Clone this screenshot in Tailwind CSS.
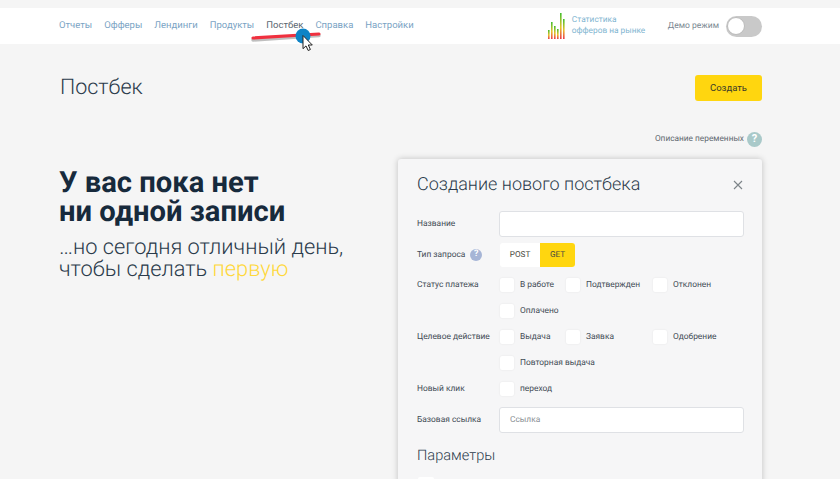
<!DOCTYPE html>
<html lang="ru">
<head>
<meta charset="utf-8">
<script src="https://cdn.jsdelivr.net/npm/@tailwindcss/browser@4"></script>
</head>
<body class="relative h-[479px] w-[840px] overflow-hidden bg-[#f5f5f5] font-['Roboto',sans-serif] text-[#1c2b3a] [text-rendering:geometricPrecision]">
<header class="mt-2 flex h-9 items-center bg-white pl-[59px] pr-[78px]">
  <nav class="flex gap-3 pt-[1px] text-[9.5px] text-[#7aa3c4]">
    <a>Отчеты</a><a>Офферы</a><a>Лендинги</a><a>Продукты</a><a class="text-[#5a6670]">Постбек</a><a>Справка</a><a>Настройки</a>
  </nav>
  <div class="ml-auto flex items-center">
    <svg width="18" height="26" viewBox="0 0 18 26" class="mr-1.5">
      <defs><linearGradient id="g" x1="0" y1="0" x2="0" y2="1"><stop offset="0" stop-color="#3fbf2f"/><stop offset="0.55" stop-color="#e8c22a"/><stop offset="1" stop-color="#ec3a4a"/></linearGradient></defs>
      <rect x="0" y="17" width="1.6" height="9" fill="url(#g)"/>
      <rect x="3" y="9" width="1.6" height="17" fill="url(#g)"/>
      <rect x="6" y="13" width="1.6" height="13" fill="url(#g)"/>
      <rect x="9" y="16" width="1.6" height="10" fill="url(#g)"/>
      <rect x="12" y="0" width="1.6" height="26" fill="url(#g)"/>
      <rect x="15" y="6" width="1.6" height="20" fill="url(#g)"/>
    </svg>
    <div class="w-[96px] text-[8.3px] leading-[11px] text-[#7fb5d1]">Статистика<br>офферов на рынке</div>
    <span class="text-[8.5px] text-[#7a8791]">Демо режим</span>
    <span class="ml-[7px] flex h-[21px] w-9 items-center rounded-full bg-[#c9c9c9] pl-[1px]"><span class="size-[18px] rounded-full border border-[#bbb] bg-white"></span></span>
  </div>
</header>

<main class="pl-[59px] pr-[78px]">
  <div class="mt-[30px] flex items-center justify-between">
    <h1 class="pl-[1px] text-[21.5px] font-light leading-[28px] text-[#2b3b4b]">Постбек</h1>
    <button class="h-[26px] w-[67px] rounded-[3px] bg-[#ffd60f] text-[9.5px] text-[#3a3a2a]">Создать</button>
  </div>
  <div class="mt-[30px] flex items-center justify-end gap-[3px] text-[8.3px] text-[#5f686f]">
    Описание переменных
    <span class="flex size-[15px] items-center justify-center rounded-full bg-[#a9c9c9] text-[11px] font-bold text-white">?</span>
  </div>
  <div class="mt-[12px] flex">
    <section class="w-[339px] pt-[10px]">
      <h2 class="text-[29.2px] font-bold leading-[29px] text-[#172a3c]">У вас пока нет<br>ни одной записи</h2>
      <p class="mt-[10px] text-[21.8px] font-light leading-[22px] text-[#2b3b4b]">…но сегодня отличный день,<br>чтобы сделать <span class="text-[#ffd83a]">первую</span></p>
    </section>
    <section class="h-[340px] w-[364px] rounded-[3px] bg-[#f6f6f7] pl-[19px] pr-[18px] pt-[15px] shadow-[0_0_6px_rgba(0,0,0,0.22)]">
      <div class="flex items-center justify-between">
        <h3 class="text-[18px] font-light leading-[22px] text-[#2b3b4b]">Создание нового постбека</h3>
        <svg width="10" height="10" viewBox="0 0 10 10" class="mr-[1px]"><path d="M1 1l8 8M9 1l-8 8" stroke="#7d8489" stroke-width="1.1" fill="none"/></svg>
      </div>

      <div class="mt-[15px] flex h-[26px] items-center">
        <span class="w-[82px] text-[8.4px] text-[#3f4b55]">Название</span>
        <span class="h-[26px] w-[245px] rounded-[3px] border border-[#dfe1e5] bg-white"></span>
      </div>
      <div class="mt-[6px] flex h-6 items-center">
        <span class="flex w-[83px] items-center text-[8.4px] text-[#3f4b55]">Тип запроса<span class="ml-[5px] flex size-3 items-center justify-center rounded-full bg-[#a6b5d6] text-[9px] font-bold text-white">?</span></span>
        <span class="flex h-6 overflow-hidden rounded-[3px] bg-white text-[8.2px] text-[#4a4a40]">
          <span class="flex w-10 items-center justify-center">POST</span>
          <span class="flex w-[35px] items-center justify-center bg-[#ffd60f]">GET</span>
        </span>
      </div>

      <div class="mt-[11px] flex">
        <span class="w-[83px] text-[8.4px] leading-[14px] text-[#3f4b55]">Статус платежа</span>
        <div class="grid flex-1 grid-cols-[66px_87px_1fr] gap-y-[12px] text-[8.4px] text-[#3f4b55]">
          <label class="flex h-[14px] items-center gap-[6px]"><span class="size-[14px] rounded-[2px] bg-white shadow-[0_0_2px_rgba(0,0,0,0.08)]"></span>В работе</label>
          <label class="flex h-[14px] items-center gap-[6px]"><span class="size-[14px] rounded-[2px] bg-white shadow-[0_0_2px_rgba(0,0,0,0.08)]"></span>Подтвержден</label>
          <label class="flex h-[14px] items-center gap-[6px]"><span class="size-[14px] rounded-[2px] bg-white shadow-[0_0_2px_rgba(0,0,0,0.08)]"></span>Отклонен</label>
          <label class="flex h-[14px] items-center gap-[6px]"><span class="size-[14px] rounded-[2px] bg-white shadow-[0_0_2px_rgba(0,0,0,0.08)]"></span>Оплачено</label>
        </div>
      </div>
      <div class="mt-[12px] flex">
        <span class="w-[83px] text-[8.4px] leading-[14px] text-[#3f4b55]">Целевое действие</span>
        <div class="grid flex-1 grid-cols-[66px_87px_1fr] gap-y-[12px] text-[8.4px] text-[#3f4b55]">
          <label class="flex h-[14px] items-center gap-[6px]"><span class="size-[14px] rounded-[2px] bg-white shadow-[0_0_2px_rgba(0,0,0,0.08)]"></span>Выдача</label>
          <label class="flex h-[14px] items-center gap-[6px]"><span class="size-[14px] rounded-[2px] bg-white shadow-[0_0_2px_rgba(0,0,0,0.08)]"></span>Заявка</label>
          <label class="flex h-[14px] items-center gap-[6px]"><span class="size-[14px] rounded-[2px] bg-white shadow-[0_0_2px_rgba(0,0,0,0.08)]"></span>Одобрение</label>
          <label class="col-span-3 flex h-[14px] items-center gap-[6px]"><span class="size-[14px] rounded-[2px] bg-white shadow-[0_0_2px_rgba(0,0,0,0.08)]"></span>Повторная выдача</label>
        </div>
      </div>
      <div class="mt-[12px] flex h-[14px] items-center text-[8.4px] text-[#3f4b55]">
        <span class="w-[83px]">Новый клик</span>
        <label class="flex items-center gap-[6px]"><span class="size-[14px] rounded-[2px] bg-white shadow-[0_0_2px_rgba(0,0,0,0.08)]"></span>переход</label>
      </div>
      <div class="mt-[11px] flex h-[26px] items-center">
        <span class="w-[82px] text-[8.4px] text-[#3f4b55]">Базовая ссылка</span>
        <span class="flex h-[26px] w-[245px] items-center rounded-[3px] border border-[#dfe1e5] bg-white pl-[10px] text-[8.4px] text-[#8a8f94]">Ссылка</span>
      </div>
      <h4 class="mt-[13px] text-[14.6px] font-light leading-[18px] text-[#2b3b4b]">Параметры</h4>
      <span class="mt-[13px] ml-[1px] block size-[16px] rounded-[2px] bg-white"></span>
    </section>
  </div>
</main>

<svg class="pointer-events-none absolute left-[248px] top-[26px]" width="80" height="28" viewBox="0 0 80 28">
  <path d="M5 12.5L71 8" stroke="#000" stroke-opacity="0.25" stroke-width="3.5" stroke-linecap="round" transform="translate(0 1.5)"/>
  <path d="M5 12L71 8" stroke="#f0303f" stroke-width="3.2" stroke-linecap="round"/>
  <circle cx="55" cy="10" r="7.5" fill="#0f84c6"/>
  <path d="M55 9.5v13.2l3-2.8 2.2 4.6 2.2-1-2.1-4.5h4z" fill="#fff" stroke="#222" stroke-width="1"/>
</svg>
</body>
</html>
